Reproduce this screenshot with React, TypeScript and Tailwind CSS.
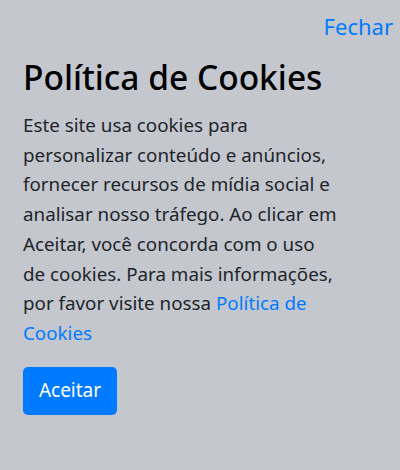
export default function App() {
  return (
    <div
      className="h-[470px] w-[400px] bg-[#c4c7ce] text-[#212529]"
      style={{ fontFamily: '"Noto Sans", "Open Sans", sans-serif' }}
    >
      <div className="flex justify-end pr-[7px] pt-[10px]">
        <a href="#" className="text-[22px] leading-[32px] text-[#007bff]">
          Fechar
        </a>
      </div>
      <div className="px-[23px] pt-[13px]">
        <h1 className="text-[33.5px] font-medium leading-[44px] text-black">
          Política de Cookies
        </h1>
        <p className="mt-[12px] w-[314px] text-[18.8px] leading-[29.7px]">
          Este site usa cookies para personalizar conteúdo e anúncios, fornecer recursos de mídia social e analisar nosso tráfego. Ao clicar em Aceitar, você concorda com o uso de cookies. Para mais informações, por favor visite nossa{" "}
          <a href="#" className="text-[#007bff]">
            Política de Cookies
          </a>
        </p>
        <button className="mt-[18px] h-[48px] w-[94px] rounded-[5px] bg-[#007bff] text-[19px] text-white">
          Aceitar
        </button>
      </div>
    </div>
  );
}
